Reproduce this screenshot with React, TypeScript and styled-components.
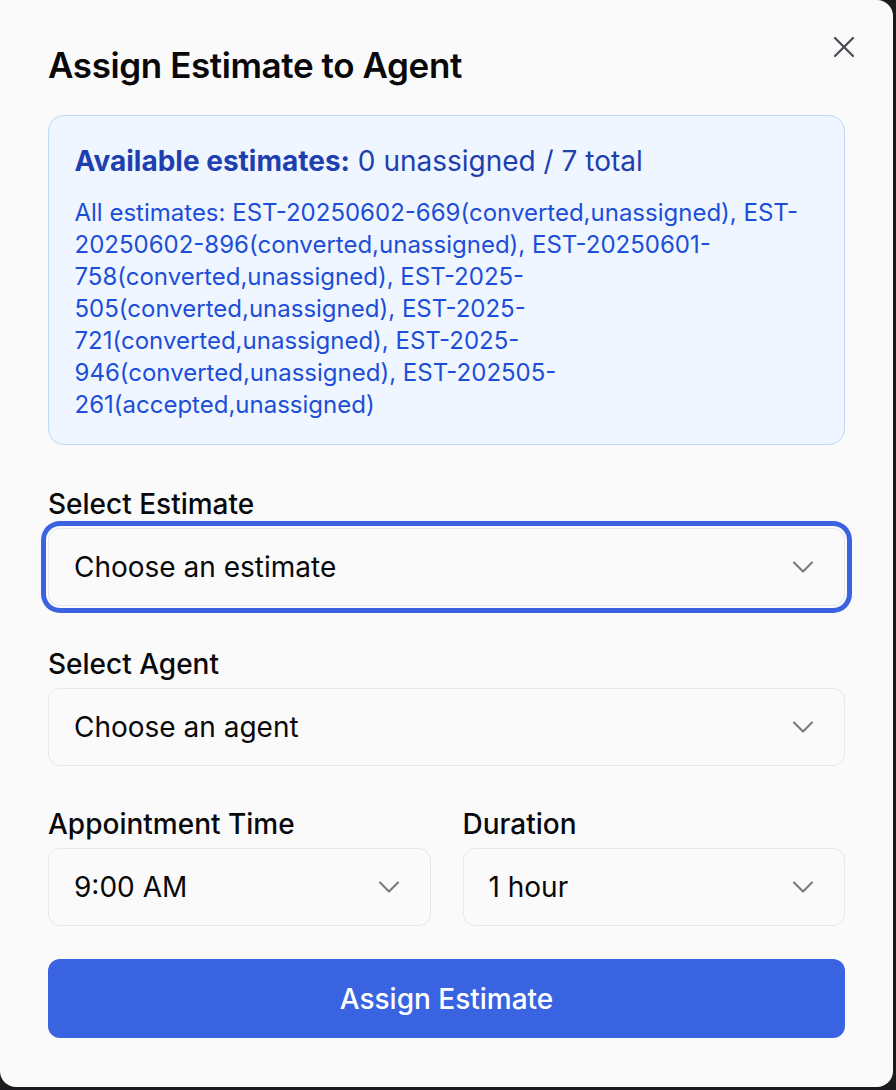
import React from "react";
import styled, { createGlobalStyle } from "styled-components";
import { X, ChevronDown } from "lucide-react";

const GlobalStyle = createGlobalStyle`
  html, body {
    margin: 0;
    padding: 0;
    background: #1b1b1d;
  }
  body {
    font-family: Inter, "Noto Sans", "Liberation Sans", sans-serif;
    -webkit-font-smoothing: antialiased;
  }
  * { box-sizing: border-box; }
`;

const Dialog = styled.div`
  position: relative;
  width: 893px;
  height: 1087px;
  background: #fafafa;
  border-radius: 0 16px 16px 16px;
  padding: 45px 48px 49px 48px;
  display: flex;
  flex-direction: column;
`;

const Title = styled.h2`
  margin: 0;
  font-size: 35px;
  line-height: 40px;
  font-weight: 600;
  color: #09090b;
  letter-spacing: -0.4px;
`;

const CloseButton = styled.button`
  position: absolute;
  top: 29px;
  right: 31px;
  width: 36px;
  height: 36px;
  padding: 0;
  border: none;
  background: transparent;
  color: #4b4b55;
  display: flex;
  align-items: center;
  justify-content: center;
  cursor: pointer;
`;

const InfoBox = styled.div`
  margin-top: 30px;
  height: 330px;
  border: 1.5px solid #bfd7fb;
  background: #eff6ff;
  border-radius: 16px;
  padding: 25px 25px 24px 25.5px;
`;

const InfoHeading = styled.p`
  margin: 0;
  font-size: 28px;
  line-height: 40px;
  color: #1e40af;
`;

const Strong = styled.span`
  font-weight: 700;
`;

const InfoDetails = styled.p`
  margin: 16px 0 0 0;
  font-size: 24px;
  line-height: 32px;
  color: #1d4ed8;
`;

const FieldGroup = styled.div<{ $top: number }>`
  margin-top: ${(p) => p.$top}px;
  display: flex;
  flex-direction: column;
  min-width: 0;
`;

const Label = styled.label`
  font-size: 28px;
  line-height: 32px;
  font-weight: 500;
  color: #09090b;
  margin-bottom: 8px;
`;

const SelectBox = styled.div<{ $focused?: boolean }>`
  height: 78px;
  border: 1.5px solid #e2e8f0;
  border-radius: 12px;
  background: #fafafa;
  display: flex;
  align-items: center;
  justify-content: space-between;
  padding: 0 23px 0 25px;
  font-size: 28px;
  color: #09090b;
  box-shadow: ${(p) =>
    p.$focused ? "0 0 0 2px #fafafa, 0 0 0 7px #3b62df" : "none"};
`;

const Chevron = styled(ChevronDown)`
  color: #6b6b73;
  opacity: 0.9;
  flex-shrink: 0;
`;

const Row = styled.div`
  margin-top: 42px;
  display: grid;
  grid-template-columns: 1fr 1fr;
  column-gap: 32px;
`;

const SubmitButton = styled.button`
  margin-top: 33px;
  height: 79px;
  width: 100%;
  border: none;
  border-radius: 12px;
  background: #3a63e2;
  color: #ffffff;
  font-family: inherit;
  font-size: 28px;
  font-weight: 500;
  cursor: pointer;
`;

type SelectProps = { value: string; focused?: boolean };

const Select: React.FC<SelectProps> = ({ value, focused }) => (
  <SelectBox $focused={focused}>
    <span>{value}</span>
    <Chevron size={36} strokeWidth={1.4} />
  </SelectBox>
);

export default function App() {
  return (
    <>
      <GlobalStyle />
      <Dialog>
        <CloseButton aria-label="Close">
          <X size={36} strokeWidth={1.5} />
        </CloseButton>
        <Title>Assign Estimate to Agent</Title>
        <InfoBox>
          <InfoHeading>
            <Strong>Available estimates:</Strong> 0 unassigned / 7 total
          </InfoHeading>
          <InfoDetails>
            All estimates: EST-20250602-669(converted,unassigned),
            EST-20250602-896(converted,unassigned),
            EST-20250601-758(converted,unassigned),
            EST-2025-505(converted,unassigned),
            EST-2025-721(converted,unassigned),
            EST-2025-946(converted,unassigned),
            EST-202505-261(accepted,unassigned)
          </InfoDetails>
        </InfoBox>
        <FieldGroup $top={43}>
          <Label>Select Estimate</Label>
          <Select value="Choose an estimate" focused />
        </FieldGroup>
        <FieldGroup $top={42}>
          <Label>Select Agent</Label>
          <Select value="Choose an agent" />
        </FieldGroup>
        <Row>
          <FieldGroup $top={0}>
            <Label>Appointment Time</Label>
            <Select value="9:00 AM" />
          </FieldGroup>
          <FieldGroup $top={0}>
            <Label>Duration</Label>
            <Select value="1 hour" />
          </FieldGroup>
        </Row>
        <SubmitButton>Assign Estimate</SubmitButton>
      </Dialog>
    </>
  );
}
